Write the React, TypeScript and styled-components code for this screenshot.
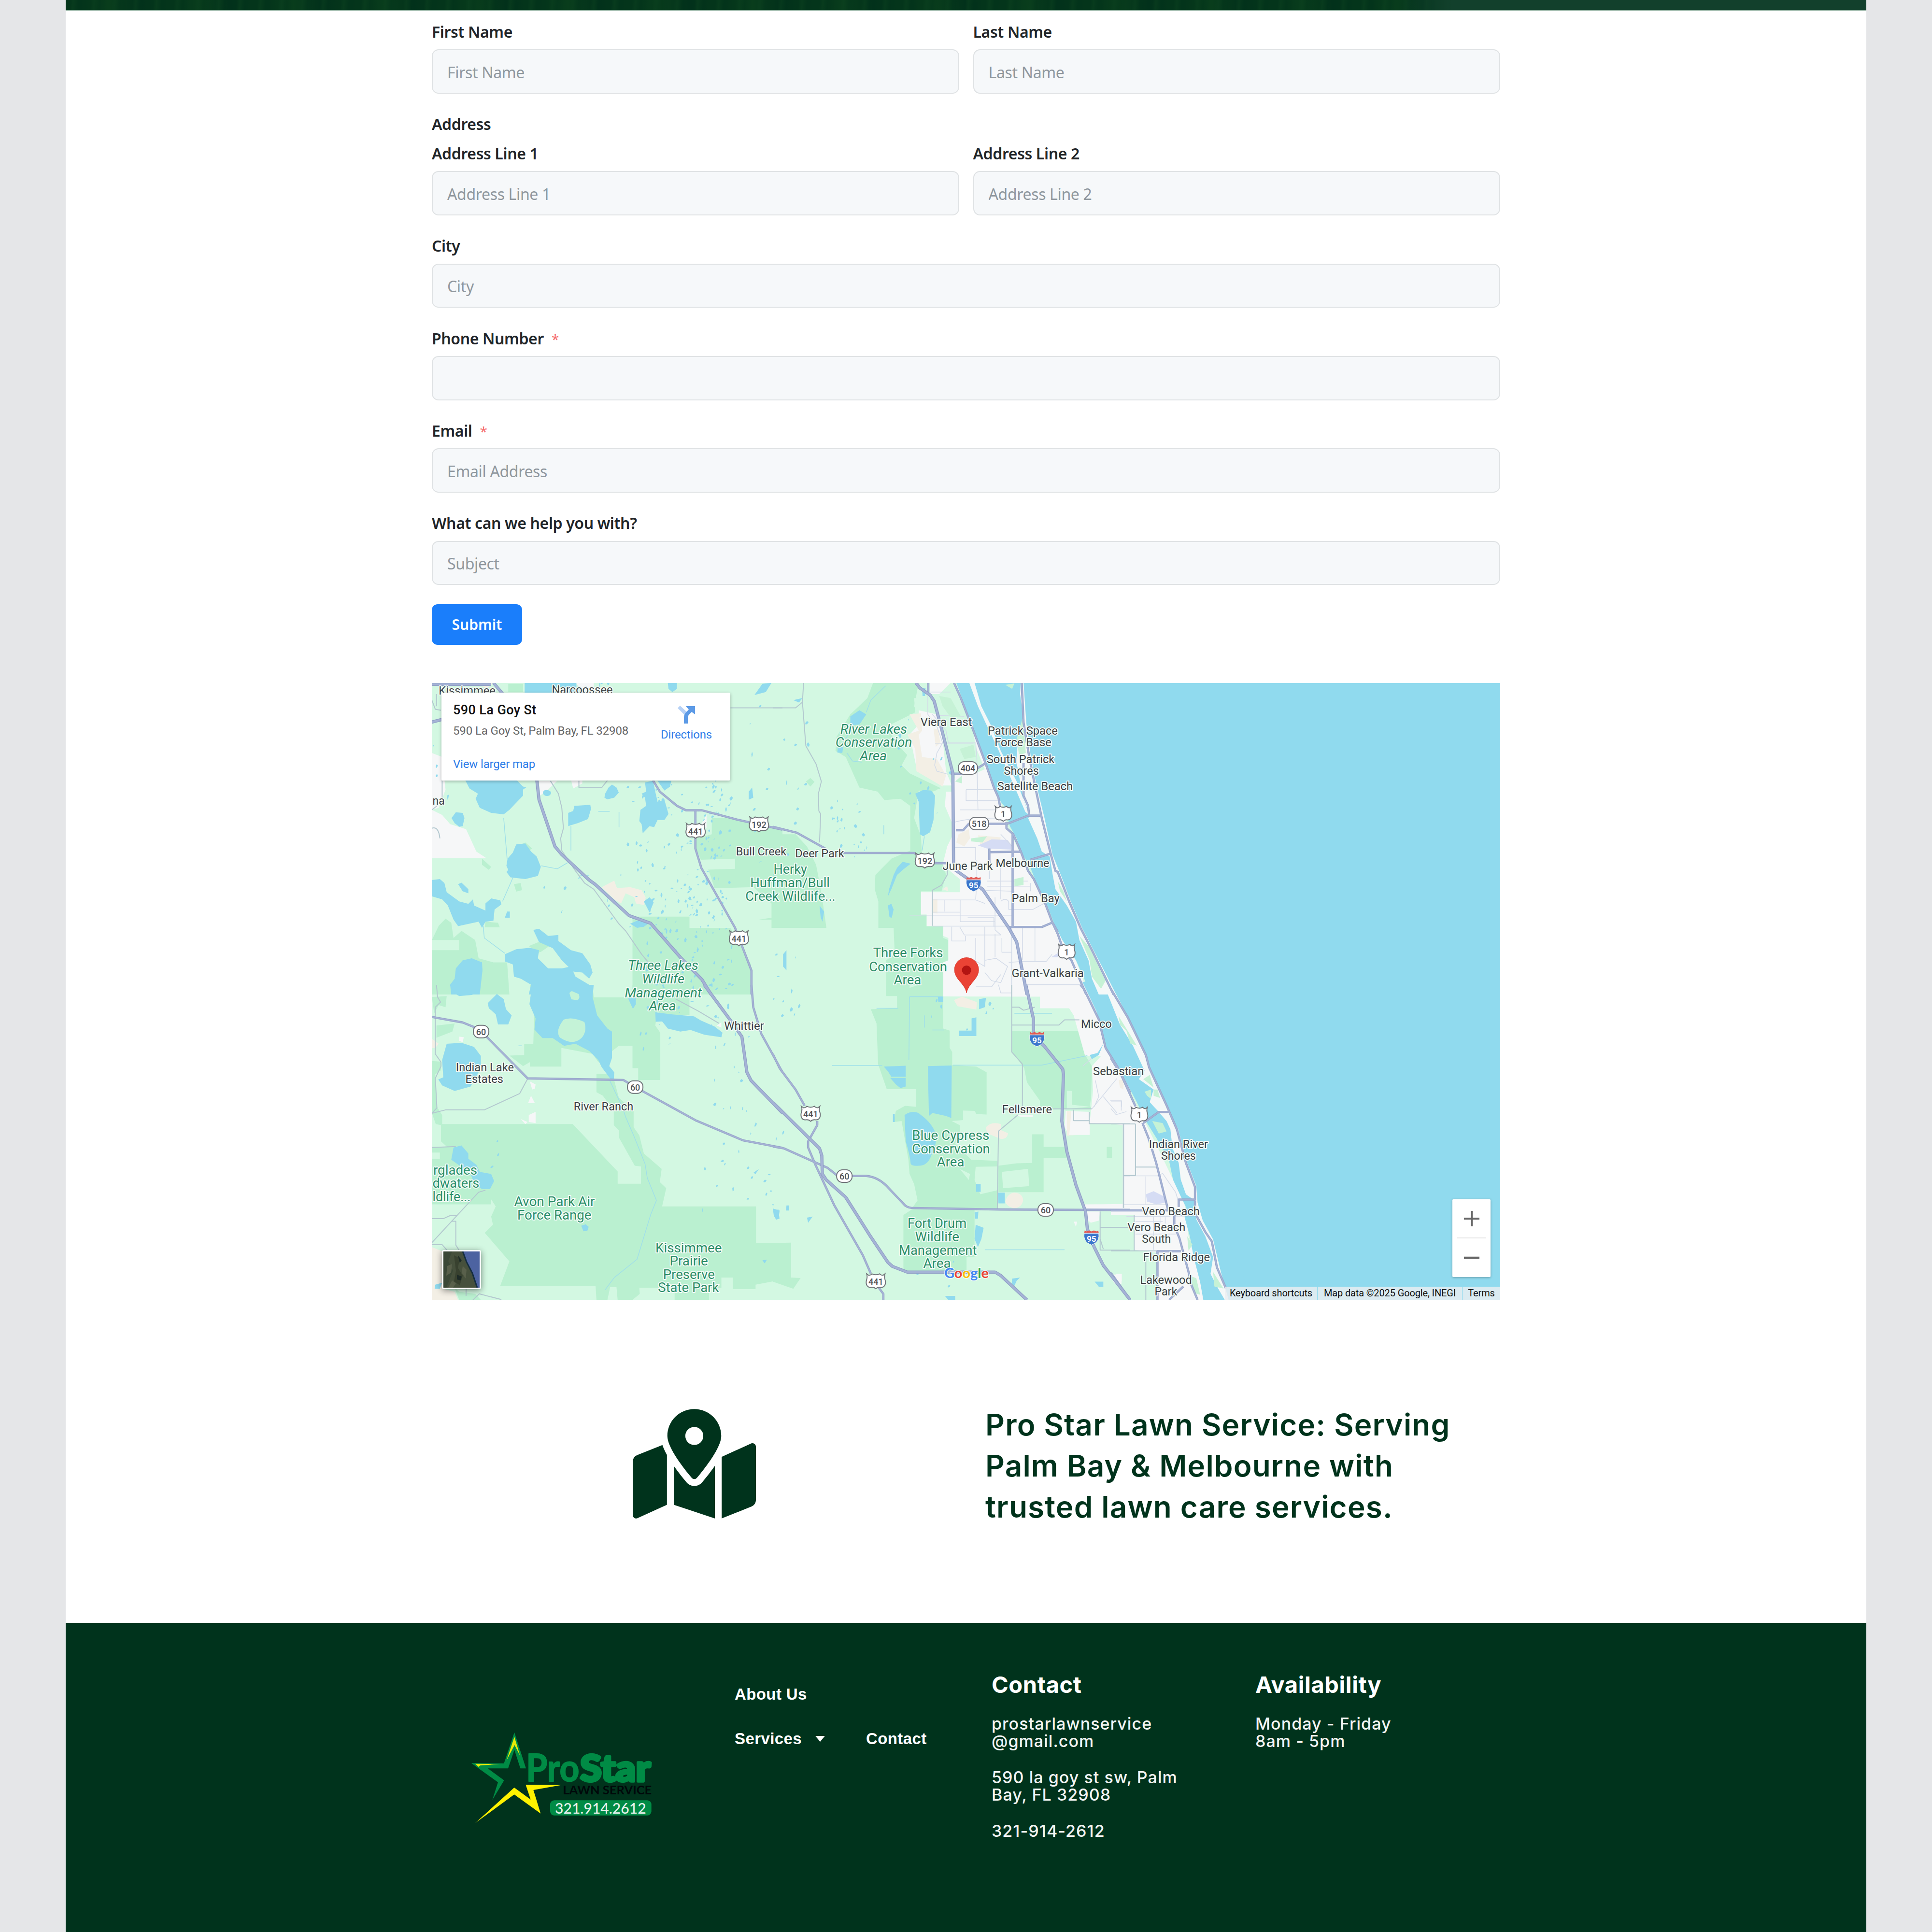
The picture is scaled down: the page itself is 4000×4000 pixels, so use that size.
import React from "react";
import styled, { createGlobalStyle } from "styled-components";
import { FaMapMarkedAlt } from "react-icons/fa";

const GlobalStyle = createGlobalStyle`
  * { box-sizing: border-box; }
  body { margin: 0; background: #e5e6e8; }
  h2, h3, p, ul { margin: 0; padding: 0; font-weight: inherit; }
`;

const formFont = `"Noto Sans", "Open Sans", sans-serif`;
const headFont = `Inter, "Noto Sans", sans-serif`;
const mapFont = `Roboto, "Liberation Sans", sans-serif`;

const Sheet = styled.div`
  width: 3728px;
  min-height: 4000px;
  margin: 0 auto;
  background: #fff;
  display: flex;
  flex-direction: column;
`;
const HeroEdge = styled.div`
  height: 22px;
  border-bottom: 1px solid #86a795;
  background:
    linear-gradient(90deg, transparent 0 74%, #12402c 77% 100%),
    repeating-linear-gradient(94deg, #06381a00 0 9px, #0b401f88 16px, #00301a44 27px, #06381a00 43px),
    repeating-linear-gradient(87deg, #04351b 0 40px, #093d1c 90px, #02311b 150px, #04351b 190px);
`;
const Column = styled.div`
  width: 2212px;
  margin: 0 auto;
`;

/* ---------- contact form ---------- */
const Form = styled.form`
  padding-top: 24px;
  display: flex;
  flex-direction: column;
  font-family: ${formFont};
`;
const FormRow = styled.div`
  display: flex;
  gap: 29px;
  margin-bottom: 43.5px;
`;
const Field = styled.div`
  flex: 1;
  display: flex;
  flex-direction: column;
`;
const Label = styled.label`
  height: 56.4px;
  font-size: 32px;
  line-height: 40px;
  font-weight: 600;
  letter-spacing: -0.38px;
  color: #212529;
`;
const GroupLabel = styled(Label)`
  height: 60.5px;
`;
const Star = styled.span`
  margin-left: 16px;
  font-size: 28px;
  font-weight: 400;
  color: #f56c6c;
`;
const Input = styled.input`
  width: 100%;
  height: 91.5px;
  padding: 2px 30px 0;
  border: 2px solid #dfe2e4;
  border-radius: 14px;
  background: #f6f8fa;
  font: 400 32px ${formFont};
  letter-spacing: -0.35px;
  color: #212529;
  &::placeholder { color: #8f979e; opacity: 1; }
`;
const Submit = styled.button`
  align-self: flex-start;
  width: 187px;
  height: 84px;
  margin-top: -4px;
  padding: 0 0 1px;
  border: 0;
  border-radius: 12px;
  background: #1a7efb;
  color: #fff;
  font: 600 30px ${formFont};
`;

function TextField({ label, hint = "", required }: { label: string; hint?: string; required?: boolean }) {
  return (
    <Field>
      <Label>{label}{required && <Star>*</Star>}</Label>
      <Input placeholder={hint} />
    </Field>
  );
}

/* ---------- map ---------- */
const MapFrame = styled.div`
  position: relative;
  height: 1277px;
  margin-top: 79px;
  overflow: hidden;
  font-family: ${mapFont};
`;
const MapSvg = styled.svg`
  display: block;
  width: 100%;
  height: 100%;
`;
const InfoCard = styled.div`
  position: absolute;
  left: 20px;
  top: 20px;
  width: 598px;
  height: 182px;
  padding: 20px 24px 18px;
  display: flex;
  justify-content: space-between;
  background: #fff;
  border-radius: 3px;
  box-shadow: 0 2px 6px rgba(0, 0, 0, 0.28);
`;
const PlaceText = styled.div`
  display: flex;
  flex-direction: column;
`;
const PlaceName = styled.div`
  font-size: 27px;
  line-height: 32px;
  font-weight: 500;
  letter-spacing: 0.4px;
  color: #111;
`;
const PlaceAddress = styled.div`
  margin-top: 13px;
  font-size: 24px;
  line-height: 28px;
  letter-spacing: -0.13px;
  color: #666;
`;
const MapLink = styled.a`
  font-size: 24px;
  line-height: 28px;
  letter-spacing: -0.17px;
  color: #2f7de9;
`;
const LargerMap = styled(MapLink)`
  margin-top: 41px;
`;
const Directions = styled.div`
  width: 110px;
  margin-right: 12px;
  padding-top: 7px;
  display: flex;
  flex-direction: column;
  align-items: center;
  gap: 9px;
`;
const ZoomBox = styled.div`
  position: absolute;
  right: 20px;
  bottom: 47px;
  width: 79px;
  height: 161px;
  display: flex;
  flex-direction: column;
  align-items: center;
  background: #fff;
  border-radius: 2px;
  box-shadow: 0 1px 5px rgba(0, 0, 0, 0.3);
`;
const ZoomButton = styled.div`
  flex: 1;
  display: flex;
  align-items: center;
`;
const ZoomLine = styled.div`
  width: 59px;
  height: 2px;
  background: #e6e6e6;
`;
const Satellite = styled.svg`
  position: absolute;
  left: 21px;
  top: 1174px;
  width: 81px;
  height: 81px;
  border: 3px solid #fff;
  border-radius: 4px;
  background: #fff;
  box-shadow: 0 3px 14px rgba(0, 0, 0, 0.45);
`;
const Credits = styled.div`
  position: absolute;
  right: 0;
  bottom: 0;
  height: 27px;
  display: flex;
  gap: 1px;
  font-size: 20px;
  line-height: 27px;
  letter-spacing: -0.13px;
  color: #111;
`;
const Credit = styled.span<{ $width: number }>`
  width: ${(p) => p.$width}px;
  text-align: center;
  white-space: nowrap;
  background: rgba(235, 238, 241, 0.82);
`;

type TileName = "nw" | "ne" | "sw" | "se" | "e";
type Tile = { x: number; y: number; sx: number; sy: number };
const tiles: Record<TileName, Tile> = {
  nw: { x: -14, y: -15, sx: 0.47194, sy: 0.42092 },
  ne: { x: 706, y: -15, sx: 0.47194, sy: 0.42092 },
  sw: { x: -14, y: 625, sx: 0.47194, sy: 0.42092 },
  se: { x: 706, y: 625, sx: 0.47194, sy: 0.42092 },
  e: { x: 1406, y: 625, sx: 0.53571, sy: 0.43367 },
};
const at = (t: TileName, x: number, y: number) => {
  const k = tiles[t];
  return { x: k.x + x * k.sx, y: k.y + y * k.sy };
};

type Shape = [TileName, string];

const parks: Shape[] = [
  ["nw", "M30 1300L60 1230 90 1195 115 1215 125 1290 160 1255 220 1300 235 1390 300 1410 360 1410 370 1568H30V1350H150V1300Z"],
  ["nw", "M1258 700H1340L1568 760V1240H1520V1200H1465L1520 1190V1120L1440 1040 1270 1045 1245 960 1210 905 1190 850V800L1258 780Z"],
  ["nw", "M910 1185H1160V1240H1340L1430 1420V1568H910Z"],
  ["nw", "M365 40H430V80H365ZM250 900L290 940 280 955 250 930ZM390 1025L420 1020 425 1055 400 1062ZM265 1210L320 1215 328 1238H262Z"],
  ["nw", "M400 840L440 820 470 850 440 870ZM455 1330L520 1300 545 1330 500 1365Z"],
  ["ne", "M0 780H100L150 840 190 930 215 1080 235 1240H0Z"],
  ["ne", "M440 35H640L650 110 620 110 625 180 500 250 540 330 590 390 565 440 600 480 740 555 700 570 640 565 620 700 650 790 655 900 745 920 760 980 740 1060H650V1175H675V1232H748V1290L770 1300V1400L748 1410V1568H497V1400L535 1370 530 1240H463V1110L447 1050 450 980 520 900 603 860V640L560 605 490 612 460 570 380 550 340 450 320 400 275 370 280 300 340 190 415 110Z"],
  ["ne", "M780 340L805 345 800 400 785 405ZM900 570L945 562V612H903ZM1100 1160L1130 1158V1178L1105 1176ZM905 640L945 630V655L910 652ZM850 1065H880V1085H855ZM145 520L165 503 183 522 165 545Z"],
  ["sw", "M240 0H460L480 100 475 290 435 292V345L370 348 430 400 460 380V402H598V310L735 340 760 380 850 300H910V410H935V468H1032V235L1010 200 1020 130 1040 150 1160 148V0H910V62H740L735 0Z"],
  ["sw", "M30 375L70 378V420L45 440 52 600 75 640V685H648L845 918V978H947V893L920 890 850 750V715L828 690V620L780 545 752 528V437L800 440 830 470 850 555 915 620 915 700 940 740 960 830 1038 905 1030 970 1058 1000 1040 1090H1452V1270H1568V1450L1450 1475V1497H1350V1440H1300V1490H1246V1550H1095V1490H940L942 1520 910 1550H845L840 1487H812L800 1550H752L748 1480H330L370 1360 262 1220 298 1180 290 1140 310 1090 290 1055V1080H30V855H65V825H30V800L95 795 70 770V690L47 685 30 630Z"],
  ["sw", "M130 1490L150 1510 220 1520 245 1550H150ZM50 200L130 190 120 230 50 260ZM30 60L95 55 90 110 60 100 40 140Z"],
  ["se", "M497 0H748V215L776 225V310L787 330V395L893 402 938 430V638L893 635 885 620 835 618V665L785 670 820 690V740L800 780 870 860 985 866V1100H610L635 1060 620 980 600 930 595 860 565 670 530 675 540 620 580 595 628 600V513H500L462 390 455 190 430 120 545 115V55H497Z"],
  ["se", "M573 1132L610 1105H885V1340H850V1415H590L573 1400Z"],
  ["se", "M1050 226H1350L1370 345 1400 400 1395 610 1172 615V570L1115 480 1103 410 1050 330Z"],
  ["se", "M1138 735H1188V797H1290V852H1188V1020H990V890L1070 878 1138 876ZM0 1270L80 1268V1440L122 1442 90 1495 0 1460ZM1465 797H1488V852H1465Z"],
  ["e", "M95 680L128 690 125 780 95 775ZM108 820L135 820 152 858H108Z"],
];
const clearings: Shape[] = [
  ["nw", "M1210 905L1360 900V950L1210 955ZM500 1360L560 1350 620 1380 630 1430 580 1455 530 1440Z"],
  ["ne", "M640 35L790 35 850 200 930 420 790 560 800 700 760 740 720 560 735 555 690 300 620 150Z"],
  ["se", "M600 0H640L600 15ZM820 905L865 930 860 960ZM890 895L985 893V1010L910 1030 885 960ZM1005 920L1120 905 1125 990 1010 1000Z"],
  ["se", "M1290 520L1312 522V590L1395 600V560L1390 600 1290 610Z"],
];
const urban: Shape[] = [
  ["nw", "M30 660L75 685 110 730 180 755 225 865 270 898H30ZM30 380L75 400 90 560 60 650 30 660ZM500 517H580L540 560 505 590ZM640 510H690V530L650 555ZM1235 685V750L1212 730ZM660 35H740V60L700 80Z"],
  ["ne", "M690 35L780 35 730 90 690 90ZM640 170L720 190 745 310 760 470 785 540 740 540 630 450 600 290 640 240Z"],
  ["ne", "M880 280L930 420 1000 620 1030 740 1075 850 1125 960 1235 1230 1330 1400 1385 1568H748V1410L770 1400V1290L748 1280V1232H675V1175H650V1065H820V1000L745 930 765 840 800 760 755 640 760 570 790 570 800 490 890 480 930 460 890 350Z"],
  ["se", "M748 0H1370L1420 130 1450 290 1568 500V1110H1365V1080L1535 1078V690L1490 685 1390 680 1405 520 1400 400 1440 350H1370L1320 150 1300 115H1172V58L748 57Z"],
  ["se", "M1285 620L1390 625V738H1300L1280 700ZM1370 1115H1436L1430 1160 1395 1170 1375 1150ZM1475 1425H1530V1470L1500 1470ZM1060 640H1140V650L1090 650ZM1320 1165L1335 1165 1330 1190Z"],
  ["e", "M0 330L40 430 130 650 190 800 240 930 285 1050 300 1200 345 1400 360 1504H180V1280L90 1265V1100H0V1065L50 1060V665L0 650ZM20 1380H42V1415L30 1410Z"],
  ["sw", "M460 475L485 490 482 510 470 515ZM465 545L482 582H452ZM455 640L485 625V680L455 675ZM420 660L450 675 440 685ZM150 255L170 258 165 282 150 275ZM1280 200L1300 185 1300 210Z"],
];
const sand: Shape[] = [
  ["nw", "M775 1040L830 1008 842 1045 900 1040 950 1055 968 1090 960 1128 925 1120 918 1090 880 1070 860 1120 830 1100ZM230 35H300L270 65Z"],
  ["ne", "M600 190L650 185 655 270 640 290 655 400 720 410 760 490 745 545 630 470 625 360 590 290 640 270ZM815 780L860 755 865 800 840 840 805 820ZM700 1100H722V1170L700 1165ZM745 1050L765 1035 770 1060ZM900 785L1000 795 990 850 910 830ZM705 260L725 265 735 330 715 350Z"],
  ["sw", "M30 1290L75 1310 80 1495 130 1510 145 1550H30ZM30 265L60 290 45 310 30 312Z"],
  ["se", "M795 75L830 58 895 85 893 122 810 105ZM935 700Q960 670 1000 685L1002 715 1032 730Q1028 760 1000 758L940 730ZM1060 1022Q1098 1025 1098 1062 1090 1100 1055 1098 1025 1090 1020 1065 1030 1025 1060 1022ZM1290 620L1310 620 1300 745 1330 742 1290 742Z"],
  ["e", "M30 455L50 450 48 500 35 490Z"],
];
const airports: Shape[] = [
  ["ne", "M900 835L960 805 1030 808 1045 830V855L940 850ZM1220 1385L1250 1365V1385Z"],
  ["e", "M135 1000L165 985 205 1010 210 1040 175 1048 140 1035Z"],
];
const water: Shape[] = [
  ["nw", "M437 35H664V90H437Z"],
  ["nw", "M170 500H390L430 545 445 548 430 560 430 590 370 660 345 682 290 675 240 650 222 605 232 580 195 555Z"],
  ["nw", "M116 700L135 672 165 675 173 700 165 740 150 743 130 725Z"],
  ["nw", "M357 935L362 900 385 870 400 830 440 825 465 865 490 890 508 940 495 985 440 1000 375 992 357 965 365 955Z"],
  ["nw", "M30 1005L65 1000 85 1020 95 1065 150 1110 190 1122 210 1100 215 1130 265 1155 265 1120 290 1095 330 1105 335 1125 305 1150 300 1205 265 1210 250 1240 235 1210 145 1232 125 1200 100 1130 75 1100 30 1085Z"],
  ["nw", "M475 1250L500 1245 540 1280 585 1275 585 1305 640 1350 690 1365 725 1420 735 1460 720 1490 690 1460 650 1455 600 1400 560 1340 500 1310Z"],
  ["nw", "M350 1370L400 1345 460 1338 500 1350 495 1390 540 1440 600 1440 640 1430 660 1480 735 1530 735 1568H455L465 1520 420 1490 390 1480 385 1420 350 1405Z"],
  ["nw", "M135 1440L165 1400 205 1390 250 1410 252 1450 240 1568H115L110 1520 130 1490Z"],
  ["nw", "M628 675L650 665 655 640 725 635 728 655 715 705 670 725 640 735 628 740Z"],
  ["nw", "M790 580L805 550 820 535 840 550 850 575 830 600 800 608 787 600ZM517 575Q520 560 535 562 553 565 553 578 548 592 535 592 518 590 517 575Z"],
  ["nw", "M965 525L1000 517 1010 570 1020 620 1050 610 1068 680 1050 710 1020 710 1005 745 985 740 955 775 950 730 940 715 945 660 970 640 965 600 950 580 970 570ZM1020 517H1080L1075 545 1050 565Z"],
  ["nw", "M960 1110L985 1090 1003 1115 985 1165ZM900 1220L930 1205 985 1215 960 1235 930 1240ZM1480 40L1520 35 1495 80 1445 95ZM1065 35H1105V65L1085 80 1068 65ZM360 1160H372V1190H350Z"],
  ["nw", "M145 1025L160 1018 190 1050 190 1070 165 1060ZM1420 570L1435 550 1440 600 1420 610ZM95 590L105 585 100 615Z"],
  ["ne", "M625 580L660 562 695 565 712 590 705 710 690 770 660 790 645 780 640 620Z"],
  ["ne", "M340 200L380 170 410 190 380 240 340 245ZM285 350L310 340 305 380 283 378ZM545 945L570 915 605 925 570 955 545 980 520 1050 505 1085 510 1050 530 980ZM505 1130L520 1122 530 1150 522 1190 512 1188ZM90 120L130 110 115 132ZM655 60L670 62 668 100 657 100ZM205 1130L225 1160 218 1210 210 1190ZM45 1370L60 1350 60 1450 45 1430Z"],
  ["sw", "M110 0H240V35L205 50 150 55 125 40ZM275 90L315 45 345 70 355 120 380 150 365 195 320 195 310 145 280 115Z"],
  ["sw", "M470 0H740L735 60 755 150 800 215 820 230 820 360 808 400 830 430 828 465 815 465 775 405 760 370 720 325 660 290 610 300 560 262 515 262 480 220 485 165 458 95Z"],
  ["sw", "M95 290L160 285 215 305 245 350 245 410 200 500 130 522 75 495 58 465 80 455 75 370ZM125 800L160 790 190 830 190 855 225 885 240 920 290 930 303 965 285 1005 250 1005 215 975 200 930 165 900 115 860Z"],
  ["sw", "M1010 135L1080 145 1180 155 1210 175 1270 205 1305 235 1300 258 1225 245 1165 222 1120 230 1065 215 1040 180 1012 182ZM890 65L925 62 925 95 912 118Z"],
  ["sw", "M685 1185L705 1178 718 1190 712 1210 695 1212ZM1535 1110L1550 1105 1555 1150 1540 1155ZM45 1475L75 1465 65 1495 42 1495ZM1440 925L1465 905 1450 930ZM1480 1355L1500 1352 1490 1370Z"],
  ["se", "M680 400L785 397 783 655 760 645 700 630 685 645ZM487 402L583 398V452H520L505 425ZM515 458H583V500L560 508 540 490Z"],
  ["se", "M578 640Q620 610 650 640 700 680 718 740 718 790 695 840 680 890 640 890 610 892 605 880 600 830 583 770 590 710Z"],
  ["se", "M817 225H872V165L893 160V252H817ZM724 58H748V85H726ZM905 70L935 65 930 110 905 120ZM987 1022H1018V1075H990ZM890 1180L925 1195 915 1250 900 1290 885 1250ZM885 1120L902 1115 900 1150 888 1150ZM1050 1445L1085 1440 1070 1455 1060 1480 1048 1470ZM755 1530H800V1550H770ZM1412 1460H1450V1485H1430ZM892 980H912V1018H892ZM527 635H535V675H527Z"],
  ["se", "M1450 290L1430 345 1400 365 1390 345 1425 335ZM0 1100L30 1110 25 1150 5 1140ZM150 1145L175 1140 155 1170ZM60 1085H70V1110H58Z"],
];
const lagoon: Shape[] = [
  ["ne", "M805 35H1568V1568H1385L1370 1500 1330 1400 1270 1300 1235 1220 1200 1120 1150 1000 1125 930 1090 870 1070 800 1040 740 1015 640 1000 620 960 520 930 420 880 270 850 170Z"],
  ["se", "M1358 -15H1568V510L1540 450 1510 395 1465 310 1445 220 1420 130Z"],
  ["e", "M-20 -10H1520V1510H358L345 1420 320 1300 305 1200 285 1110 290 1060 270 1010 240 930 225 840 190 760 160 700 140 660 100 560 40 420 0 320Z"],
];
const islands: Shape[] = [
  ["ne", "M862 35H885L915 150 955 240 1000 370 1070 520 1125 685 1108 670 1060 545 990 365 935 235 900 150Z"],
  ["ne", "M1087 35H1100L1112 230 1132 400 1157 540 1192 700 1227 880 1267 990 1307 1110 1357 1240 1407 1350 1467 1480 1505 1568H1430L1400 1490 1385 1400 1345 1300 1330 1210 1290 1130 1240 1050 1228 980 1215 890 1180 865 1160 800 1120 700 1130 690 1100 610 1070 430 1075 300 1098 200 1085 90Z"],
  ["se", "M1455 -10L1480 -10 1568 190V250L1520 150 1520 90Z"],
  ["e", "M-30 -10L5 10 65 150 135 330 155 420 215 575 260 690 295 850 330 960 335 1040 355 1125 395 1215 425 1370 455 1504H440L410 1440 385 1380 395 1300 365 1200 330 1120 325 1030 290 1000 270 930 262 850 238 780 230 690 215 650 180 600 150 560 165 500 108 450 130 410 85 290 35 190Z"],
];
const islandGreen: Shape[] = [
  ["ne", "M1070 310L1098 200 1110 380 1080 390ZM1345 1280L1385 1330 1460 1500 1440 1540 1400 1480 1390 1400ZM1020 45L1060 38 1050 65ZM1250 1010L1275 1060 1290 1110 1260 1060Z"],
  ["e", "M30 150L100 290 75 280 60 220 35 190ZM125 450L150 430 165 490ZM165 500L180 500 190 540 165 530ZM160 650L200 660 215 700 185 710ZM395 1370L435 1450 400 1440ZM295 1200L315 1240 300 1270ZM130 510L155 500 155 545 140 530ZM305 1390L330 1400 345 1480 320 1470Z"],
  ["ne", "M730 100L780 110 825 200 780 205 745 150ZM820 360L880 340 890 400 840 410ZM1060 1000L1100 990 1100 1030 1060 1035ZM870 800L940 790 920 820 870 815ZM800 520L830 490 830 530Z"],
];
const streets: Shape[] = [
  ["nw", "M550 517L585 580 600 650 607 750 595 800 600 860 660 960 700 1020 740 1050 850 1220 880 1255 950 1370 980 1410M675 517V550H775L800 515M1340 158H1568M30 120L45 165 70 170M50 90V150M75 517V620L30 660M30 750Q60 740 65 800"],
  ["ne", "M0 158H100L130 130 135 35M130 130L145 345 190 435 213 520 200 580 202 665 210 680 205 820M770 920L765 980 740 1030 700 1055V1230"],
  ["sw", "M50 0L55 60 68 85 45 110V340L70 380 70 400 45 460 52 605 30 632M30 632L90 615H260L415 535 450 462M30 800L135 795M265 1010L235 1020 30 1268M30 1150H80L110 1135H140M115 1163H135V1280L180 1360V1530M30 1278H75L100 1310M210 1550L238 1520 335 1548M1100 70L1200 130 1290 190"],
  ["se", "M1048 0V330L1095 390V600M1050 198H1255L1280 172H1345M1230 610H1400M1075 640L990 720 985 1100M1050 110H1080L1100 125 1150 110M1436 1115V1305H1568M1436 1193H1568M1436 1250L1450 1300M1388 625V683H1568M1320 615V668H1388"],
  ["e", "M0 664H95M48 665V1065M95 665V910H48M0 1158H90M0 1270H180M90 1100V1270M135 1280V1504M95 870H180"],
];
const blocks: Shape[] = [
  ["ne", "M690 80H780M715 195L840 200M680 100V190L720 250 745 330 720 380 710 440 720 470 770 485M700 190L760 270 770 330H890L895 400 900 660M712 332H880M848 560H975M848 560V615H990M820 660H1000M800 720Q860 700 980 700M800 845H890V905M950 925V1000M1000 780L1050 840M895 905V1010L890 1100M1000 940V1100M940 1010H1120M940 1035H1130M910 1055L1060 1060M700 1103H890L930 1120M700 1163H822M752 1105V1160M822 1105V1210H975M975 1090V1250L1000 1275H840L820 1235M700 1232H1040M785 1235V1305H845V1280M855 1190H970V1235M600 1178H1050M1000 1110Q1020 1090 1035 1110V1150H1140L1190 1120M1095 1240V1400M1150 1240V1405M930 1235V1400M975 1270V1385M890 1290V1400M1005 1290V1360H1048M1048 1240V1560M885 1400L930 1430V1400L980 1390 1030 1430 1000 1510 960 1500 930 1460M890 1530H960L1000 1470M990 1520L1000 1560H1048M1035 1410L1100 1405H1200L1225 1370M1100 1520H1350M1130 1060V1020M1060 940H1110M905 700L900 750M890 480V440"],
  ["se", "M1360 400L1440 320M1400 610L1510 460M1415 470L1430 550 1410 600M1450 550L1510 630M1480 570H1530V600M1540 680V1100M1365 1100H1568M1540 940H1568"],
  ["e", "M0 555H40V600M0 590L20 620 60 605M50 912H180L200 900M95 1050H220M50 1050H95M135 915V1050M60 1105H230M95 1130H200M165 1105V1265M190 1105V1150M210 1110V1140M95 1190H250M200 900L250 990 260 1030M140 1060V1110"],
];
const highways: Shape[] = [
  ["nw", "M30 42H290M300 35L345 95M30 228L75 215M490 510L500 610 570 840 600 880 720 1005 745 1025 895 1180 990 1218 1120 1385 1215 1495 1255 1568"],
  ["sw", "M1225 0L1340 175 1390 255 1412 430 1430 470 1568 630"],
  ["se", "M0 578L205 805 215 840 217 930 235 960 320 1045 430 1240 505 1365 525 1385 590 1413H975L1000 1430 1115 1550"],
  ["ne", "M628 35L645 60 690 95 708 125 740 260 790 480 793 920 800 955 870 1010 920 1050 1035 1240 1070 1310 1115 1568"],
  ["se", "M1110 0L1143 165V250L1190 300 1272 415 1275 440 1268 670 1290 820 1330 985 1372 1115 1380 1200 1410 1290 1450 1380 1568 1550"],
];
const roads: Shape[] = [
  ["nw", "M1000 515L1030 570 1105 640 1145 662H1215L1370 708 1568 757M1186 665V850L1212 945 1360 1240 1432 1450V1568"],
  ["ne", "M0 743L105 772 230 850M310 872H620L640 885M705 922H760M780 482H860L930 433M803 760H835L860 728H1030L1120 688H1172M1052 780V1235M950 850V925M950 868L1090 865M1035 1236H1180L1225 1215M1130 905L1220 875M1092 35L1100 230 1125 400 1150 540 1180 700 1220 880 1240 960 1250 965 1300 1110 1350 1240 1400 1350 1495 1568M795 35L825 110 880 270 930 420 970 550 990 600 1000 660M1100 430L1100 590 1120 640 1125 690M1025 720V750L1055 780 1090 870 1120 960 1145 1000 1195 1120 1225 1210 1250 1270 1275 1350 1310 1400 1375 1568M682 35V95M1225 1210L1250 1260"],
  ["sw", "M30 158L165 185 220 210 265 250 450 460 870 468 925 505 1190 668 1395 765 1568 802M1432 0L1440 110 1475 240 1568 430"],
  ["se", "M0 340L30 410 100 515 140 595M195 670V690L155 770V800L185 880 270 1085 395 1330 430 1420M465 1490L485 1520V1550M0 795L50 805 240 900 285 940H410Q460 945 500 990L580 1085Q595 1098 620 1098L1000 1105 1568 1108M1350 0L1365 20 1430 170 1460 310 1510 400 1568 530"],
  ["e", "M0 20L65 155 135 335 148 395 215 575 255 690 290 850 325 965V1025H262V1060M325 1030V1090L365 1180 390 1225 410 1350 445 1450M0 350L40 430 95 580M125 660L185 607H222M122 660L145 730 175 850 220 1070M0 1077H330M245 1150V1100H330M245 1150L265 1210 300 1370 310 1430 335 1504M180 1504V1272H270M225 1504L280 1440M0 1375L75 1504"],
];
const creeks: Shape[] = [
  ["nw", "M345 700L360 900M510 935L580 950 625 920M385 995L340 1110M640 740V860M255 1230L260 1290 350 1365M760 667H810M851 670V745"],
  ["ne", "M495 50L430 120 410 180M350 250L310 330M325 380L350 420 390 425M665 790L655 860M487 735V780"],
  ["sw", "M810 470L865 600 880 650 915 740 965 880 975 950 1015 1060 990 1130 930 1350 830 1440 790 1500M425 300H410"],
  ["se", "M600 58H745M600 58L597 370M665 150V210M700 222H750M790 395H1180L1380 348M260 397H480M930 1303H1280M455 115H550M1060 140H1225"],
];

/* Small ponds scattered over the wetlands, from a fixed seed. */
const pondFields: [number, number, number, number, number][] = [
  [400, 210, 200, 330, 110], [560, 20, 60, 330, 46], [440, 410, 180, 230, 80], [650, 20, 130, 400, 22],
  [0, 90, 30, 110, 12], [200, 380, 200, 110, 10], [430, 640, 190, 120, 30], [580, 700, 120, 260, 8],
  [560, 880, 170, 240, 24], [820, 240, 80, 120, 22], [960, 60, 120, 220, 14], [700, 560, 60, 130, 10],
  [90, 900, 90, 150, 4], [1020, 640, 160, 80, 8], [960, 1160, 200, 100, 4], [230, 0, 180, 20, 8],
];
const ponds = (() => {
  let seed = 71;
  const next = () => ((seed = (seed * 16807) % 2147483647) / 2147483647);
  return pondFields.map(([x, y, w, h, n]) => {
    let d = "";
    for (let i = 0; i < n; i++) {
      const a = 0.8 + next() * 2.8;
      const b = 1.2 + next() * 4.2;
      const px = x + next() * w;
      const py = y + next() * h;
      d += `M${px.toFixed(1)} ${py.toFixed(1)}l${a.toFixed(1)} ${(-b).toFixed(1)} ${a.toFixed(1)} ${(b * next()).toFixed(1)} ${(-a * next()).toFixed(1)} ${b.toFixed(1)} ${(-a).toFixed(1)} ${(b * 0.2).toFixed(1)}z`;
    }
    return d;
  }).join("");
})();

function Layer({ shapes, fill = "none", stroke, width }: { shapes: Shape[]; fill?: string; stroke?: string; width?: number }) {
  return (
    <g fill={fill} stroke={stroke} strokeWidth={width} strokeLinejoin="round">
      {shapes.map(([t, d], i) => {
        const k = tiles[t];
        return <path key={i} d={d} vectorEffect="non-scaling-stroke" transform={`translate(${k.x} ${k.y}) scale(${k.sx} ${k.sy})`} />;
      })}
    </g>
  );
}

type Name = [TileName, string, number, number, number];
const towns: Name[] = [
  ["nw", "Kissimmee", 60, 309, 93], ["nw", "Narcoossee", 556, 823, 87], ["nw", "na", 33, 86, 634],
  ["nw", "Bull Creek", 1364, 1585, 884], ["ne", "Deer Park", 98, 313, 893], ["ne", "Viera East", 648, 874, 247],
  ["ne", "Patrick Space", 943, 1250, 290], ["ne", "Force Base", 973, 1222, 346], ["ne", "South Patrick", 938, 1236, 430],
  ["ne", "Shores", 1014, 1167, 487], ["ne", "Satellite Beach", 985, 1316, 563], ["ne", "June Park", 745, 965, 955],
  ["ne", "Melbourne", 978, 1213, 940], ["ne", "Palm Bay", 1048, 1258, 1115], ["ne", "Grant-Valkaria", 1048, 1364, 1483],
  ["sw", "Whittier", 1312, 1487, 222], ["sw", "Indian Lake", 135, 390, 425], ["sw", "Estates", 177, 343, 482],
  ["sw", "River Ranch", 652, 914, 618], ["se", "Micco", 1352, 1487, 212], ["se", "Sebastian", 1405, 1628, 444],
  ["se", "Fellsmere", 1006, 1225, 632], ["e", "Indian River", 147, 375, 779], ["e", "Shores", 194, 328, 834],
  ["e", "Vero Beach", 120, 343, 1099], ["e", "Vero Beach", 64, 288, 1177], ["e", "South", 120, 232, 1231],
  ["e", "Florida Ridge", 124, 383, 1318], ["e", "Lakewood", 113, 313, 1427], ["e", "Park", 169, 256, 1482],
];
const reserves: Name[] = [
  ["ne", "Herky", 3, 150, 975], ["ne", "Huffman/Bull", -99, 250, 1041], ["ne", "Creek Wildlife...", -120, 275, 1107],
  ["ne", "Three Forks", 440, 747, 1386], ["ne", "Conservation", 422, 765, 1453], ["ne", "Area", 531, 651, 1519],
  ["se", "Blue Cypress", 611, 950, 763], ["se", "Conservation", 611, 953, 828], ["se", "Area", 720, 840, 894],
  ["se", "Fort Drum", 591, 850, 1196], ["se", "Wildlife", 624, 818, 1262], ["se", "Management", 553, 895, 1328], ["se", "Area", 660, 781, 1393],
  ["sw", "Avon Park Air", 391, 745, 1088], ["sw", "Force Range", 405, 730, 1154],
  ["sw", "Kissimmee", 1011, 1302, 1316], ["sw", "Prairie", 1073, 1241, 1381], ["sw", "Preserve", 1044, 1271, 1446], ["sw", "State Park", 1022, 1289, 1512],
  ["sw", "rglades", 36, 229, 933], ["sw", "dwaters", 33, 238, 999], ["sw", "ldlife...", 33, 200, 1065],
];
const italicReserves: Name[] = [
  ["ne", "River Lakes", 296, 589, 284], ["ne", "Conservation", 275, 611, 350], ["ne", "Area", 382, 500, 416],
  ["nw", "Three Lakes", 890, 1199, 1448], ["nw", "Wildlife", 952, 1138, 1514], ["sw", "Management", 876, 1214, 61], ["sw", "Area", 982, 1101, 126],
];
function Names({ list, size, color, italic }: { list: Name[]; size: number; color: string; italic?: boolean }) {
  return (
    <g fontSize={size} fill={color} stroke="#f4fbf7" strokeWidth={4} strokeLinejoin="round" paintOrder="stroke" fontStyle={italic ? "italic" : undefined}>
      {list.map(([t, text, x0, x1, base], i) => {
        const a = at(t, x0, base);
        return <text key={i} x={a.x} y={a.y} textLength={(x1 - x0) * tiles[t].sx} lengthAdjust="spacingAndGlyphs">{text}</text>;
      })}
    </g>
  );
}

const usShields: [TileName, string, number, number][] = [
  ["nw", "441", 1187, 762], ["nw", "192", 1465, 730], ["nw", "441", 1377, 1290], ["ne", "192", 667, 908],
  ["ne", "1", 1011, 678], ["ne", "1", 1289, 1357], ["se", "441", 166, 633], ["se", "441", 452, 1457], ["e", "1", 110, 619],
];
const stateShields: [TileName, string, number, number][] = [
  ["ne", "404", 856, 454], ["ne", "518", 905, 727], ["sw", "60", 246, 230], ["sw", "60", 922, 503], ["se", "60", 314, 941], ["se", "60", 1197, 1107],
];
const interstates: [TileName, number, number][] = [["ne", 881, 1026], ["se", 1159, 268], ["se", 1398, 1244]];

function Shields() {
  return (
    <g fontSize={18} textAnchor="middle" fontWeight={500}>
      {usShields.map(([t, n, x, y], i) => {
        const p = at(t, x, y);
        const w = n.length > 1 ? 20 : 17.5;
        return (
          <g key={i} transform={`translate(${p.x} ${p.y})`}>
            <path
              d={`M${-w + 1} -15L${-w * 0.75} -12Q${-w * 0.5} -12 ${-w * 0.4} -15 0 -11 ${w * 0.4} -15 ${w * 0.5} -12 ${w * 0.75} -12L${w - 1} -15Q${w - 3} -9 ${w - 1} -3 ${w + 1} 3 ${w - 1} 8 ${w - 4} 14 ${w - 10} 13 4 12 0 16 -4 12 ${-w + 10} 13 ${-w + 4} 14 ${-w + 1} 8 ${-w - 1} 3 ${-w + 1} -3 ${-w + 3} -9 ${-w + 1} -15Z`}
              fill="#fff" stroke="#6f7378" strokeWidth={2}
            />
            <text y={8} fill="#4d5156">{n}</text>
          </g>
        );
      })}
      {stateShields.map(([t, n, x, y], i) => {
        const p = at(t, x, y);
        const w = n.length > 2 ? 20 : 16;
        return (
          <g key={i} transform={`translate(${p.x} ${p.y})`}>
            <rect x={-w} y={-13} width={w * 2} height={26} rx={12} fill="#fff" stroke="#6f7378" strokeWidth={2} />
            <text y={7} fill="#4d5156">{n}</text>
          </g>
        );
      })}
      {interstates.map(([t, x, y], i) => {
        const p = at(t, x, y);
        return (
          <g key={i} transform={`translate(${p.x} ${p.y})`}>
            <path d="M-15 -9H15Q17 4 8 11L0 15 -8 11Q-17 4 -15 -9Z" fill="#3a76cc" stroke="#f2f4f8" strokeWidth={1} />
            <path d="M-14 -15L-11 -13 -5 -15 0 -13 5 -15 11 -13 14 -15 15 -10H-15Z" fill="#e25b55" />
            <text y={8} fill="#fff" fontSize={17} fontWeight={700}>95</text>
          </g>
        );
      })}
    </g>
  );
}

function MapCanvas() {
  const pin = at("ne", 850, 1560);
  const g = at("se", 752, 1443);
  return (
    <MapSvg viewBox="0 0 2212 1277" preserveAspectRatio="none">
      <rect width="2213" height="1277" fill="#d3f8e2" />
      <Layer shapes={parks} fill="#baf0d0" />
      <Layer shapes={clearings} fill="#d3f8e2" />
      <Layer shapes={urban} fill="#f6f7f8" />
      <Layer shapes={sand} fill="#f3efe5" />
      <Layer shapes={airports} fill="#d5dcf4" />
      <Layer shapes={blocks} stroke="#d3dbe8" width={1.5} />
      <Layer shapes={creeks} stroke="#a0dfe9" width={1.5} />
      <path d={ponds} fill="#90daee" />
      <Layer shapes={water} fill="#90daee" />
      <Layer shapes={lagoon} fill="#90daee" />
      <path d="M1440 0H2213V1277H1700L1440 640Z" fill="#90daee" />
      <Layer shapes={islands} fill="#f4f8f8" />
      <Layer shapes={islandGreen} fill="#c6f2d6" />
      <path d="M273 697Q255 720 265 734 292 752 310 735 322 722 316 702 290 690 273 697ZM286 646Q283 640 290 638L304 644Q308 652 302 657L289 655Z" fill="#c4f3d7" />
      <Layer shapes={streets} stroke="#b3c8cf" width={2} />
      <Layer shapes={roads} stroke="#98a6ca" width={4.6} />
      <Layer shapes={roads} stroke="#a6b3d5" width={2.4} />
      <Layer shapes={highways} stroke="#91a0c6" width={6.6} />
      <Layer shapes={highways} stroke="#a5b3d6" width={4} />
      <Names list={towns} size={24} color="#3b3f43" />
      <Names list={reserves} size={27} color="#2c8f6a" />
      <Names list={italicReserves} size={27} color="#2c8f6a" italic />
      <Shields />
      <g transform={`translate(${pin.x} ${pin.y})`}>
        <path d="M0 0C-3 -19 -25 -28 -25 -48A25 25 0 0 1 25 -48C25 -28 3 -19 0 0Z" fill="#ea4335" stroke="#d9382c" strokeWidth={1} />
        <circle cy={-47} r={9.6} fill="#b31412" />
      </g>
      <g transform={`translate(${g.x} ${g.y})`}>
        <text fontSize={28} fontWeight={700} stroke="#ffffffb0" strokeWidth={3} paintOrder="stroke" textLength={92} lengthAdjust="spacingAndGlyphs" fontFamily="Lato, sans-serif">
          <tspan fill="#4285f4">G</tspan><tspan fill="#ea4335">o</tspan><tspan fill="#fbbc04">o</tspan><tspan fill="#4285f4">g</tspan><tspan fill="#34a853">l</tspan><tspan fill="#ea4335">e</tspan>
        </text>
      </g>
    </MapSvg>
  );
}

function LocationMap() {
  return (
    <MapFrame>
      <MapCanvas />
      <InfoCard>
        <PlaceText>
          <PlaceName>590 La Goy St</PlaceName>
          <PlaceAddress>590 La Goy St, Palm Bay, FL 32908</PlaceAddress>
          <LargerMap>View larger map</LargerMap>
        </PlaceText>
        <Directions>
          <svg width="36" height="37" viewBox="0 0 36 37">
            <path d="M5 0L19 13 14 19 0 5Z" fill="#b6d1f6" />
            <path d="M13 37V24Q13 18 18 13L23 8 17 1H36V18L29 13 24 18Q21 21 21 25V37Z" fill="#5c9ae6" />
          </svg>
          <MapLink>Directions</MapLink>
        </Directions>
      </InfoCard>
      <Satellite viewBox="0 0 75 75" preserveAspectRatio="none">
        <rect width="75" height="75" fill="#46503c" />
        <path d="M0 0H18L10 20 20 40 6 75H0Z" fill="#3b4836" />
        <path d="M22 8L34 14 30 34 40 50 34 70 22 62 26 40Z" fill="#38412f" />
        <path d="M8 30L18 26 16 44 6 50ZM40 30L48 38 46 56 38 44ZM18 60L26 66 20 75H10Z" fill="#59604b" />
        <path d="M28 48L38 52 36 60 28 58ZM30 8L38 18 34 24Z" fill="#1d2a26" />
        <path d="M40 0H75V75H70L60 45 48 22Z" fill="#4d63a1" />
        <path d="M40 0L48 22 60 45 70 75" fill="none" stroke="#152e40" strokeWidth="3" />
      </Satellite>
      <ZoomBox>
        <ZoomButton>
          <svg width="32" height="32" viewBox="0 0 32 32"><path d="M0 16H32M16 0V32" stroke="#666" strokeWidth="4" /></svg>
        </ZoomButton>
        <ZoomLine />
        <ZoomButton>
          <svg width="32" height="32" viewBox="0 0 32 32"><path d="M0 16H32" stroke="#666" strokeWidth="4.5" /></svg>
        </ZoomButton>
      </ZoomBox>
      <Credits>
        <Credit $width={191}>Keyboard shortcuts</Credit>
        <Credit $width={299}>Map data ©2025 Google, INEGI</Credit>
        <Credit $width={78}>Terms</Credit>
      </Credits>
    </MapFrame>
  );
}

/* ---------- service area ---------- */
const AreaSection = styled.section`
  height: 669px;
  display: grid;
  grid-template-columns: 1087px 1fr;
  column-gap: 59px;
  padding-top: 216px;
  color: #00331c;
`;
const AreaIcon = styled.div`
  display: flex;
  justify-content: center;
  padding-top: 10px;
  svg { width: 255px; height: 227px; }
`;
const AreaTitle = styled.h2`
  font: 600 62px/85px ${headFont};
  letter-spacing: 1.2px;
  white-space: pre-line;
`;

/* ---------- footer ---------- */
const Footer = styled.footer`
  flex: 1;
  background: #00331c;
  color: #fff;
`;
const FooterGrid = styled(Column)`
  display: grid;
  grid-template-columns: 627px 532px 546px 1fr;
  align-items: start;
`;
const Logo = styled.svg`
  width: 375px;
  height: 190px;
  margin: 226px 0 0 81px;
`;
const FooterNav = styled.nav`
  display: flex;
  flex-wrap: wrap;
  width: 440px;
  padding-top: 128px;
  row-gap: 52px;
  column-gap: 84px;
`;
const NavItem = styled.a<{ $full?: boolean }>`
  display: flex;
  align-items: center;
  gap: 27px;
  width: ${(p) => (p.$full ? "100%" : "auto")};
  font: 700 33px/40px "Liberation Sans", Arial, sans-serif;
  letter-spacing: 0.4px;
`;
const FooterBlock = styled.div`
  display: flex;
  flex-direction: column;
  padding-top: 101px;
`;
const FooterTitle = styled.h3`
  font: 700 47px/54px ${headFont};
  letter-spacing: 0.6px;
`;
const FooterText = styled.p<{ $first?: boolean }>`
  margin-top: ${(p) => (p.$first ? 36 : 39)}px;
  font: 500 34px/36px ${headFont};
  letter-spacing: 1.05px;
  white-space: pre-line;
  color: #f2f5f3;
`;

const brandGreen = "#008b45";

function ProStarLogo() {
  return (
    <Logo viewBox="45 262 1125 570">
      <path d="M315 264L387 488H352L315 372 276 488H150L251 562 178 684 213 574 47 455 250 457Z" fill={brandGreen} />
      <path d="M315 292L350 408 316 343 266 438ZM72 459L225 460 102 470 92 478Z" fill="#e8ea08" />
      <path d="M385 589L606 591 433 622 478 768 314 650 72 827 314 607 416 681Z" fill="#fff200" />
      <g fontFamily="Lato, Inter, sans-serif" strokeLinejoin="round">
        <text x="388" y="569" fontSize="234" fontWeight="700" fill={brandGreen} stroke={brandGreen} strokeWidth="6" textLength="330" lengthAdjust="spacingAndGlyphs">Pro</text>
        <text x="723" y="567" fontSize="230" fontWeight="900" fill={brandGreen} stroke={brandGreen} strokeWidth="16" textLength="438" lengthAdjust="spacingAndGlyphs">Star</text>
        <text x="616" y="649" fontSize="75" fontWeight="700" fill="#00080a" textLength="552" lengthAdjust="spacingAndGlyphs">LAWN SERVICE</text>
      </g>
      <rect x="537" y="686" width="629" height="94" rx="26" fill={brandGreen} />
      <text x="567" y="768" fontSize="95" fontWeight="500" fill="#e8f3ee" textLength="566" lengthAdjust="spacingAndGlyphs" fontFamily="Lato, Inter, sans-serif">321.914.2612</text>
    </Logo>
  );
}

export default function App() {
  return (
    <>
      <GlobalStyle />
      <Sheet>
        <HeroEdge />
        <Column>
          <Form>
            <FormRow>
              <TextField label="First Name" hint="First Name" />
              <TextField label="Last Name" hint="Last Name" />
            </FormRow>
            <GroupLabel as="div">Address</GroupLabel>
            <FormRow>
              <TextField label="Address Line 1" hint="Address Line 1" />
              <TextField label="Address Line 2" hint="Address Line 2" />
            </FormRow>
            <FormRow><TextField label="City" hint="City" /></FormRow>
            <FormRow><TextField label="Phone Number" required /></FormRow>
            <FormRow><TextField label="Email" hint="Email Address" required /></FormRow>
            <FormRow><TextField label="What can we help you with?" hint="Subject" /></FormRow>
            <Submit type="button">Submit</Submit>
          </Form>
          <LocationMap />
          <AreaSection>
            <AreaIcon><FaMapMarkedAlt /></AreaIcon>
            <AreaTitle>{"Pro Star Lawn Service: Serving\nPalm Bay & Melbourne with\ntrusted lawn care services."}</AreaTitle>
          </AreaSection>
        </Column>
        <Footer>
          <FooterGrid>
            <ProStarLogo />
            <FooterNav>
              <NavItem $full>About Us</NavItem>
              <NavItem>
                Services
                <svg width="22" height="12" viewBox="0 0 22 12"><path d="M1 0H21L11 12Z" fill="#fff" /></svg>
              </NavItem>
              <NavItem>Contact</NavItem>
            </FooterNav>
            <FooterBlock>
              <FooterTitle>Contact</FooterTitle>
              <FooterText $first>{"prostarlawnservice\n@gmail.com"}</FooterText>
              <FooterText>{"590 la goy st sw, Palm\nBay, FL 32908"}</FooterText>
              <FooterText>321-914-2612</FooterText>
            </FooterBlock>
            <FooterBlock>
              <FooterTitle>Availability</FooterTitle>
              <FooterText $first>{"Monday - Friday\n8am - 5pm"}</FooterText>
            </FooterBlock>
          </FooterGrid>
        </Footer>
      </Sheet>
    </>
  );
}
